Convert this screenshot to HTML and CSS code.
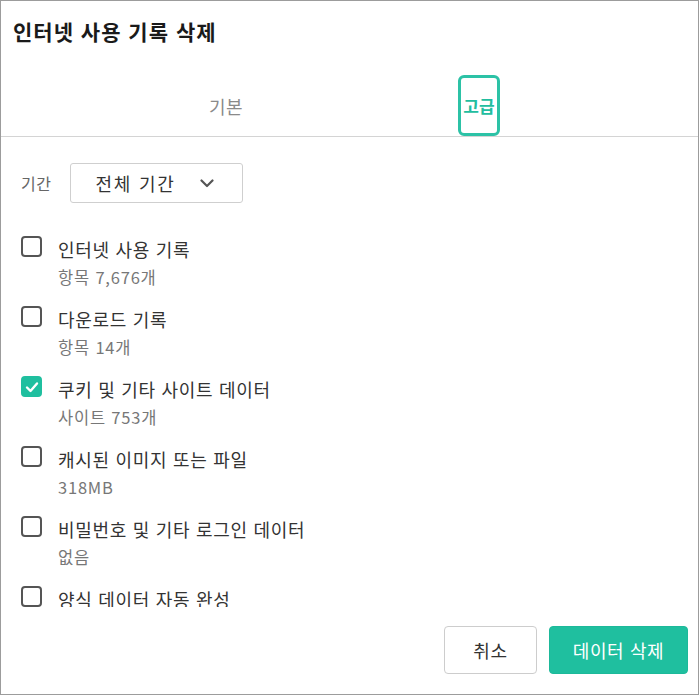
FILE: index.html
```html
<!DOCTYPE html>
<html lang="ko">
<head>
<meta charset="utf-8">
<title>인터넷 사용 기록 삭제</title>
<link rel="stylesheet" href="styles.css">
</head>
<body>
<div class="frame">
  <h1 class="title">인터넷 사용 기록 삭제</h1>
  <div class="tabs">
    <div class="tab"><span class="tab-label">기본</span></div>
    <div class="tab"><span class="tab-label active">고급</span></div>
  </div>
  <div class="content">
    <div class="range-row">
      <span class="range-label">기간</span>
      <div class="select">
        <span class="select-text">전체 기간</span>
        <svg class="chevron" width="14" height="9" viewBox="0 0 14 9"><polyline points="1.5,1.5 7,7 12.5,1.5" fill="none" stroke="#555" stroke-width="2.2" stroke-linecap="round" stroke-linejoin="round"/></svg>
      </div>
    </div>
    <div class="items">
      <div class="item">
        <span class="box"></span>
        <div class="texts"><div class="label">인터넷 사용 기록</div><div class="sub">항목 7,676개</div></div>
      </div>
      <div class="item">
        <span class="box"></span>
        <div class="texts"><div class="label">다운로드 기록</div><div class="sub">항목 14개</div></div>
      </div>
      <div class="item">
        <span class="box checked"><svg width="14" height="12" viewBox="0 0 14 12"><polyline points="2,6.5 5.5,10 12,2.5" fill="none" stroke="#fff" stroke-width="2.4" stroke-linecap="round" stroke-linejoin="round"/></svg></span>
        <div class="texts"><div class="label">쿠키 및 기타 사이트 데이터</div><div class="sub">사이트 753개</div></div>
      </div>
      <div class="item">
        <span class="box"></span>
        <div class="texts"><div class="label">캐시된 이미지 또는 파일</div><div class="sub">318MB</div></div>
      </div>
      <div class="item">
        <span class="box"></span>
        <div class="texts"><div class="label">비밀번호 및 기타 로그인 데이터</div><div class="sub">없음</div></div>
      </div>
      <div class="item">
        <span class="box"></span>
        <div class="texts"><div class="label">양식 데이터 자동 완성</div></div>
      </div>
    </div>
  </div>
  <div class="footer">
    <button class="btn cancel">취소</button>
    <button class="btn primary">데이터 삭제</button>
  </div>
</div>
</body>
</html>
```
FILE: styles.css
```css
html, body {
  margin: 0;
  padding: 0;
  background: #fff;
}
body {
  font-family: "Noto Sans CJK KR", "Noto Sans", sans-serif;
  color: #333;
}
.frame {
  box-sizing: border-box;
  width: 699px;
  height: 695px;
  border: 1px solid #9c9c9c;
  display: flex;
  flex-direction: column;
  overflow: hidden;
}
.title {
  margin: 0;
  padding: 16px 0 0 12px;
  font-size: 21px;
  line-height: 28px;
  letter-spacing: 1px;
  font-weight: 700;
  color: #1a1a1a;
}
.tabs {
  margin-top: 31px;
  display: flex;
  justify-content: center;
  border-bottom: 1px solid #d4d4d4;
  height: 60px;
  padding-left: 6px;
}
.tab {
  width: 253px;
  display: flex;
  justify-content: center;
  align-items: stretch;
}
.tab-label {
  display: flex;
  align-items: center;
  font-size: 18px;
  letter-spacing: 0.5px;
  color: #8a8a8a;
  padding: 0 5px;
  border: 3px solid transparent;
  border-radius: 6px;
  margin-top: -1px;
}
.tab-label.active {
  color: #22bd9f;
  font-weight: 700;
  letter-spacing: 0;
  font-size: 17px;
  border-color: #2cc2a6;
  padding: 0 2px;
}
.content {
  flex: 1;
  overflow: hidden;
  padding: 26px 0 0 20px;
}
.range-row {
  display: flex;
  align-items: center;
  gap: 19px;
}
.range-label {
  font-size: 16px;
  letter-spacing: 0.5px;
  color: #666;
}
.select {
  box-sizing: border-box;
  width: 173px;
  height: 40px;
  border: 1px solid #cfcfcf;
  border-radius: 3px;
  display: flex;
  align-items: center;
  justify-content: space-between;
  padding: 0 28px 0 24px;
}
.select-text {
  font-size: 18px;
  letter-spacing: 1.8px;
  color: #333;
}
.items {
  margin-top: 32px;
  display: flex;
  flex-direction: column;
  gap: 14px;
}
.item {
  display: flex;
  align-items: flex-start;
  gap: 16px;
}
.box {
  box-sizing: border-box;
  flex: none;
  width: 21px;
  height: 21px;
  margin-top: 1px;
  border: 2px solid #555;
  border-radius: 4px;
  display: flex;
  align-items: center;
  justify-content: center;
}
.box.checked {
  border-color: #1fbf9f;
  background: #1fbf9f;
}
.label {
  font-size: 18px;
  line-height: 28px;
  letter-spacing: 0.7px;
  color: #333;
}
.sub {
  font-size: 16.5px;
  line-height: 28px;
  letter-spacing: 0.8px;
  color: #777;
}
.footer {
  flex: none;
  height: 87px;
  box-sizing: border-box;
  display: flex;
  justify-content: flex-end;
  align-items: flex-start;
  padding: 19px 10px 0 0;
  gap: 12px;
}
.btn {
  font-family: inherit;
  font-size: 18px;
  letter-spacing: 0.6px;
  height: 48px;
  border-radius: 4px;
  cursor: pointer;
}
.cancel {
  width: 93px;
  background: #fff;
  border: 1px solid #cdcdcd;
  color: #333;
}
.primary {
  width: 139px;
  background: #1fbf9f;
  border: 1px solid #1db99a;
  color: #fff;
}
```
